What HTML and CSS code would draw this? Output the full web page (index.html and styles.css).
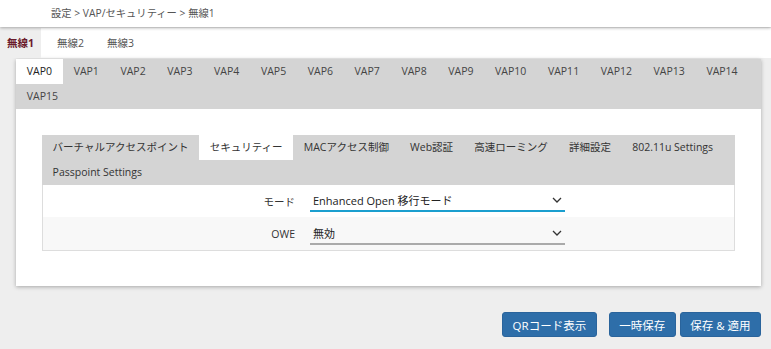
FILE: index.html
```html
<!DOCTYPE html>
<html lang="ja">
<head>
    <meta charset="UTF-8">
    <meta name="viewport" content="width=device-width, initial-scale=1.0">
    <title>VAP/セキュリティー</title>
    <link rel="stylesheet" href="styles.css">
</head>
<body>
    <header class="topbar">
        <div class="crumb">設定 &gt; VAP/セキュリティー &gt; 無線1</div>
    </header>

    <nav class="radio-tabs">
        <a class="radio-tab active">無線1</a>
        <a class="radio-tab">無線2</a>
        <a class="radio-tab">無線3</a>
    </nav>

    <main class="content">
        <section class="card">
            <div class="vap-tabs">
                <a class="vap-tab active">VAP0</a>
                <a class="vap-tab">VAP1</a>
                <a class="vap-tab">VAP2</a>
                <a class="vap-tab">VAP3</a>
                <a class="vap-tab">VAP4</a>
                <a class="vap-tab">VAP5</a>
                <a class="vap-tab">VAP6</a>
                <a class="vap-tab">VAP7</a>
                <a class="vap-tab">VAP8</a>
                <a class="vap-tab">VAP9</a>
                <a class="vap-tab">VAP10</a>
                <a class="vap-tab">VAP11</a>
                <a class="vap-tab">VAP12</a>
                <a class="vap-tab">VAP13</a>
                <a class="vap-tab">VAP14</a>
                <a class="vap-tab">VAP15</a>
            </div>

            <div class="card-body">
                <div class="sub-tabs">
                    <a class="sub-tab">バーチャルアクセスポイント</a>
                    <a class="sub-tab active">セキュリティー</a>
                    <a class="sub-tab">MACアクセス制御</a>
                    <a class="sub-tab">Web認証</a>
                    <a class="sub-tab">高速ローミング</a>
                    <a class="sub-tab">詳細設定</a>
                    <a class="sub-tab">802.11u Settings</a>
                    <a class="sub-tab">Passpoint Settings</a>
                </div>

                <div class="form">
                    <div class="form-row">
                        <label class="form-label">モード</label>
                        <div class="select focused">
                            <span>Enhanced Open 移行モード</span>
                            <svg class="chevron" width="10" height="6" viewBox="0 0 10 6"><path d="M1 1l4 4 4-4" fill="none" stroke="#333" stroke-width="1.3"/></svg>
                        </div>
                    </div>
                    <div class="form-row alt">
                        <label class="form-label">OWE</label>
                        <div class="select">
                            <span>無効</span>
                            <svg class="chevron" width="10" height="6" viewBox="0 0 10 6"><path d="M1 1l4 4 4-4" fill="none" stroke="#333" stroke-width="1.3"/></svg>
                        </div>
                    </div>
                </div>
            </div>
        </section>

        <div class="actions">
            <button class="btn qr">QRコード表示</button>
            <button class="btn">一時保存</button>
            <button class="btn">保存 &amp; 適用</button>
        </div>
    </main>
</body>
</html>
```

FILE: styles.css
```css
body {
    margin: 0;
    background: #eeeeee;
    font-family: "Open Sans", "Noto Sans CJK JP", sans-serif;
    font-size: 10.5px;
    color: #333;
}
a {
    cursor: pointer;
}
.topbar {
    height: 27px;
    background: #fff;
    box-shadow: 0 1px 3px rgba(0, 0, 0, 0.3);
    position: relative;
    z-index: 1;
}
.crumb {
    padding-left: 51px;
    line-height: 27px;
    font-size: 10.3px;
    color: #555;
}
.radio-tabs {
    display: flex;
    gap: 9px;
    height: 30px;
    margin-top: 1px;
    background: #fff;
}
.radio-tab {
    padding: 0 7px;
    line-height: 31px;
    color: #555;
}
.radio-tab.active {
    background: #eeeeee;
    color: #6a1b2b;
    font-weight: bold;
}
.content {
    padding: 1px 10px 0 16px;
}
.card {
    background: #fff;
    box-shadow: 0 1px 4px rgba(0, 0, 0, 0.3);
}
.vap-tabs {
    display: flex;
    flex-wrap: wrap;
    background: #d4d4d4;
    padding-right: 1px;
}
.vap-tab {
    padding: 0 10.8px;
    line-height: 25px;
    color: #444;
}
.vap-tab.active {
    background: #fff;
    color: #222;
}
.card-body {
    padding: 26px 26px 35px;
}
.sub-tabs {
    display: flex;
    flex-wrap: wrap;
    background: #d4d4d4;
}
.sub-tab {
    padding: 0 10.6px;
    line-height: 25px;
    color: #333;
}
.sub-tab.active {
    background: #fff;
}
.form {
    border: 1px solid #dddddd;
    border-top: none;
}
.form-row {
    display: flex;
    align-items: center;
    height: 32px;
    background: #fff;
}
.form-row.alt {
    background: #f8f8f8;
    height: 33px;
}
.form-label {
    width: 252px;
    text-align: right;
    color: #333;
}
.select {
    display: flex;
    align-items: center;
    justify-content: space-between;
    width: 249px;
    height: 20px;
    margin-left: 15px;
    padding: 0 3px 0 3px;
    border-bottom: 2px solid #aaaaaa;
    font-size: 11px;
    color: #222;
}
.select.focused {
    border-bottom-color: #1b9fcf;
}
.actions {
    display: flex;
    justify-content: flex-end;
    gap: 4px;
    margin-top: 26px;
}
.btn {
    height: 25px;
    padding: 0 9.5px;
    border: 1px solid #2a649c;
    border-radius: 3px;
    background: #2e6ea9;
    color: #fff;
    font-family: "Open Sans", "Noto Sans CJK JP", sans-serif;
    font-size: 11.5px;
}
.btn.qr {
    margin-right: 8px;
}
```
